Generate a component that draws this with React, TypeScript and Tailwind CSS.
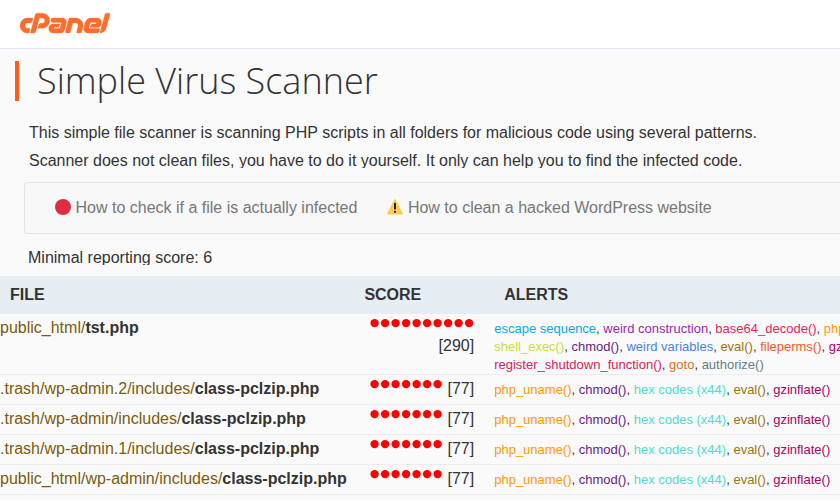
import { FaCpanel } from "react-icons/fa";

type Alert = [name: string, color: string];
type Row = { dir: string; file: string; dots: number; score: number; alerts: Alert[] };

const common: Alert[] = [
  ["php_uname()", "text-[#ff9800]"],
  ["chmod()", "text-[#691b7f]"],
  ["hex codes (x44)", "text-[#4dddcf]"],
  ["eval()", "text-[#997316]"],
  ["gzinflate()", "text-[#ac0060]"],
];

const rows: Row[] = [
  {
    dir: "public_html/",
    file: "tst.php",
    dots: 10,
    score: 290,
    alerts: [
      ["escape sequence", "text-[#03a9f4]"],
      ["weird construction", "text-[#9c27b0]"],
      ["base64_decode()", "text-[#e91e63]"],
      ["php_uname()", "text-[#ff9800]"],
      ["shell_exec()", "text-[#cddc39]"],
      ["chmod()", "text-[#691b7f]"],
      ["weird variables", "text-[#4c83de]"],
      ["eval()", "text-[#997316]"],
      ["fileperms()", "text-[#f0592b]"],
      ["gzinflate()", "text-[#ac0060]"],
      ["register_shutdown_function()", "text-[#d81b60]"],
      ["goto", "text-[#e07020]"],
      ["authorize()", "text-[#607d8b]"],
    ],
  },
  { dir: ".trash/wp-admin.2/includes/", file: "class-pclzip.php", dots: 7, score: 77, alerts: common },
  { dir: ".trash/wp-admin/includes/", file: "class-pclzip.php", dots: 7, score: 77, alerts: common },
  { dir: ".trash/wp-admin.1/includes/", file: "class-pclzip.php", dots: 7, score: 77, alerts: common },
  { dir: "public_html/wp-admin/includes/", file: "class-pclzip.php", dots: 7, score: 77, alerts: common },
];

function Dots({ count }: { count: number }) {
  return (
    <svg width={count * 10.5} height={9} className="shrink-0 overflow-visible" fill="#ff0000">
      {Array.from({ length: count }, (_, i) => (
        <circle key={i} cx={5.6 + i * 10.5} cy={4.1} r={4.2} />
      ))}
    </svg>
  );
}

export default function App() {
  return (
    <div className="h-[500px] w-[840px] overflow-hidden bg-[#fafafa] font-['Liberation_Sans',Arial,sans-serif] text-base text-[#333]">
      <header className="flex h-[49px] items-center overflow-hidden border-b border-[#e3e6f0] bg-white pb-px pl-5">
        <FaCpanel className="h-[72px] w-[90px] shrink-0 stroke-current stroke-2 text-[#ff6c2c]" />
      </header>

      <h1 className="mt-3 ml-[15px] h-10 border-l-4 border-[#ff5c1a] pl-[18px] font-['Open_Sans',sans-serif] text-[36px] leading-[39px] font-light whitespace-nowrap">
        Simple Virus Scanner
      </h1>

      <p className="mt-[18px] ml-[29px] h-[49px] overflow-hidden leading-[28px] whitespace-nowrap">
        This simple file scanner is scanning PHP scripts in all folders for malicious code using several patterns.
        <br />
        Scanner does not clean files, you have to do it yourself. It only can help you to find the infected code.
      </p>

      <nav className="mt-[14px] ml-6 flex h-[52px] w-[900px] items-center gap-[30px] rounded-[3px] border border-[#e3e3e3] bg-[#f8f8f8] pl-[30px] text-[#777]">
        <span className="flex items-center gap-[4.5px]">
          <span className="mb-[2px] size-4 rounded-full bg-[#dd2e44]" />
          How to check if a file is actually infected
        </span>
        <span className="flex items-center gap-[4.5px]">
          <svg viewBox="0 0 36 36" className="mb-[2px] size-4">
            <path
              fill="#ffcc4d"
              d="M2.65 35C.81 35-.07 33.66.69 32.02L16.6 1.23c.77-1.64 2.03-1.64 2.8 0l15.91 30.79C36.07 33.66 35.19 35 33.35 35z"
            />
            <path
              fill="#231f20"
              d="M15.58 28.95a2.42 2.42 0 1 1 4.84 0 2.42 2.42 0 0 1-4.84 0zm.19-18.29c0-1.3.96-2.11 2.23-2.11 1.25 0 2.24.84 2.24 2.11v11.17c0 1.27-1 2.11-2.24 2.11-1.27 0-2.23-.8-2.23-2.11z"
            />
          </svg>
          How to clean a hacked WordPress website
        </span>
      </nav>

      <p className="mt-[15px] ml-7 h-4 overflow-hidden leading-[18px]">Minimal reporting score: 6</p>

      <div className="mt-[11px] w-[960px]">
        <div className="grid h-[38px] grid-cols-[364.4px_139.8px_1fr] items-center bg-[#e6edf3] pb-px font-bold">
          <span className="pl-[10px]">FILE</span>
          <span>SCORE</span>
          <span>ALERTS</span>
        </div>
        {rows.map((row) => (
          <div key={row.dir} className="grid grid-cols-[364.2px_110px_20px_430px] border-b border-[#ededed]">
            <div className="leading-[27px] whitespace-nowrap text-[#7a5a10]">
              {row.dir}
              <b className="text-[#333]">{row.file}</b>
            </div>
            <div className="flex flex-wrap content-start justify-end gap-x-[4.6px] pt-[5px]">
              <Dots count={row.dots} />
              <span className={row.dots > 7 ? "mt-[9px] leading-[18px]" : "leading-[18px]"}>[{row.score}]</span>
            </div>
            <div />
            <div className="min-h-[29px] pt-[6px] text-[13px] leading-[18px]">
              {row.alerts.map(([name, color], i) => (
                <span key={name}>
                  <span className={color}>{name}</span>
                  {i < row.alerts.length - 1 && ", "}
                </span>
              ))}
            </div>
          </div>
        ))}
      </div>
    </div>
  );
}
